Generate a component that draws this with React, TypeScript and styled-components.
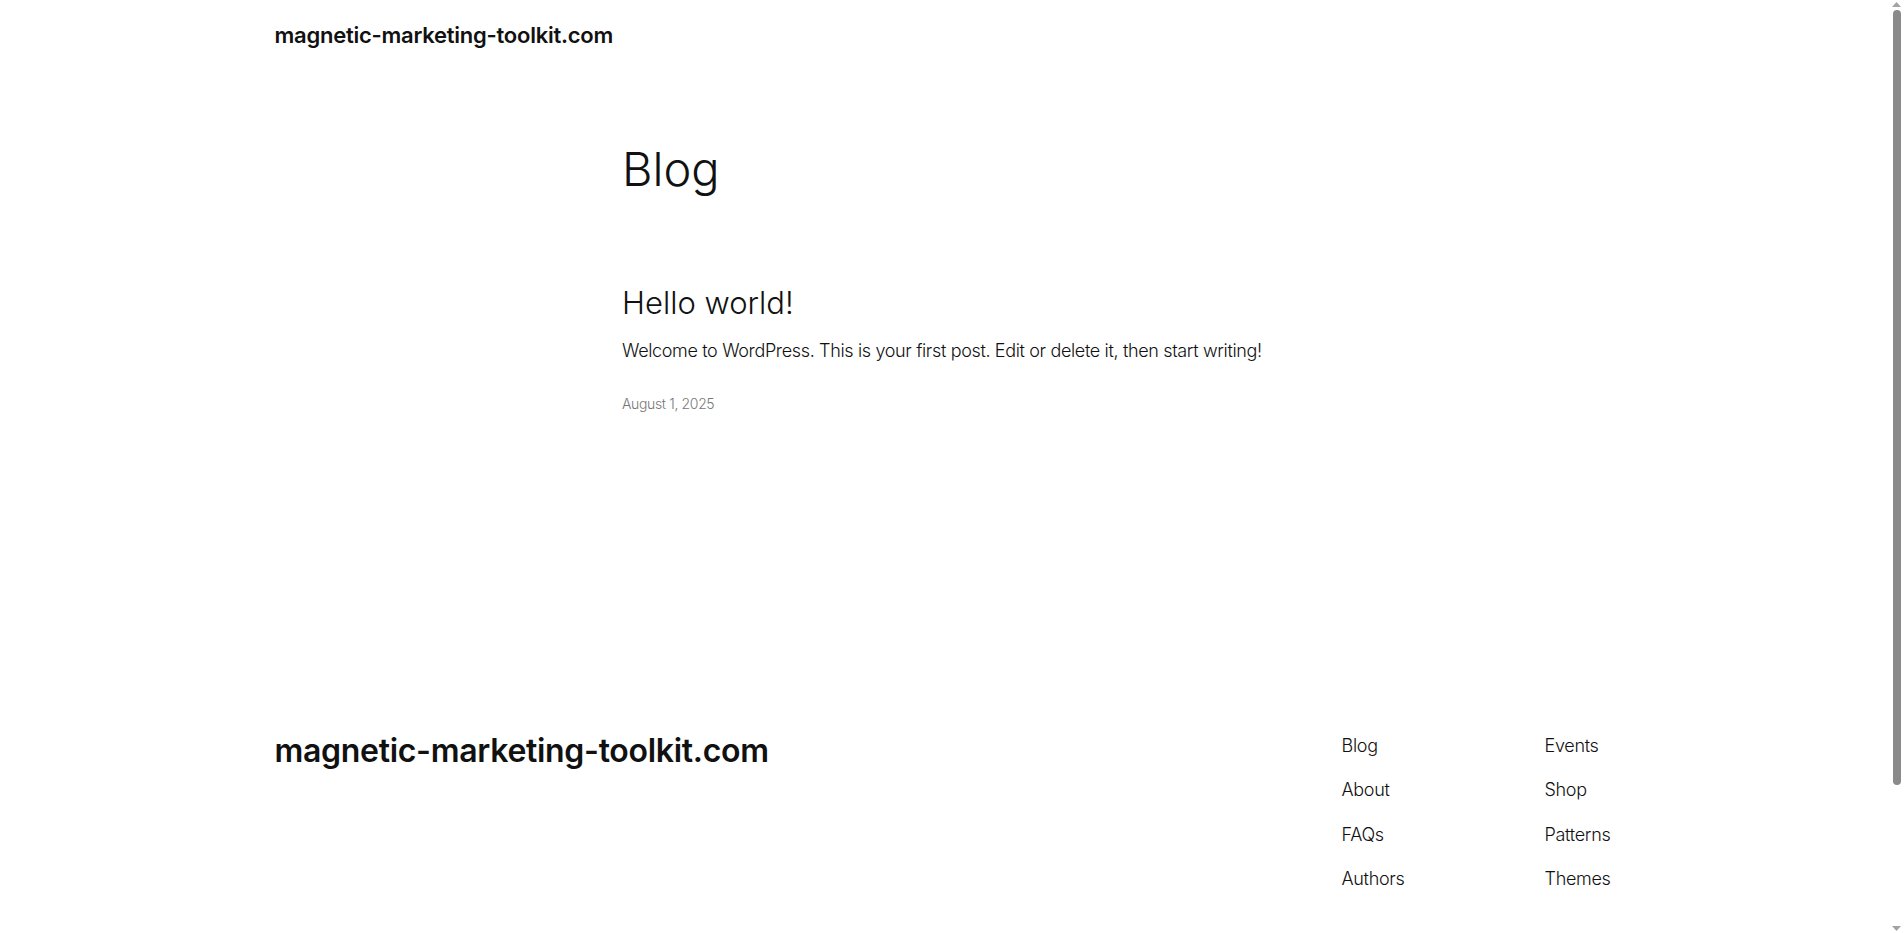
import React from "react";
import styled, { createGlobalStyle } from "styled-components";

const Global = createGlobalStyle`
  html, body { margin: 0; padding: 0; background: #ffffff; }
  body {
    font-family: Inter, "Noto Sans", "Liberation Sans", sans-serif;
    color: #111111;
    -webkit-font-smoothing: antialiased;
  }
  a { color: inherit; text-decoration: none; }
`;

const Page = styled.div`
  min-height: 1085px;
  padding-right: 15px;
  display: flex;
  flex-direction: column;
`;

const Wide = styled.div`
  width: 1340px;
  margin: 0 auto;
`;

const Header = styled(Wide)`
  padding: 20px 0;
  display: flex;
  align-items: center;
`;

const SiteTitle = styled.a<{ $size: number }>`
  font-size: ${(p) => p.$size}px;
  font-weight: 600;
  line-height: 1.4;
  letter-spacing: -0.25px;
  color: #111111;
`;

const Main = styled.main`
  width: 645px;
  margin: 0 auto;
  padding-top: 70px;
  display: flex;
  flex-direction: column;
`;

const PageTitle = styled.h1`
  margin: 0;
  font-size: 47px;
  line-height: 56px;
  font-weight: 300;
  letter-spacing: 0;
`;

const Post = styled.article`
  margin-top: 87px;
  display: flex;
  flex-direction: column;
`;

const PostTitle = styled.h2`
  margin: 0;
  font-size: 31px;
  line-height: 37px;
  font-weight: 300;
  letter-spacing: 0;
`;

const Excerpt = styled.p`
  margin: 16px 0 0;
  font-size: 18px;
  line-height: 28.8px;
  font-weight: 300;
  letter-spacing: -0.35px;
`;

const PostDate = styled.time`
  margin-top: 27px;
  font-size: 14px;
  line-height: 22px;
  font-weight: 300;
  color: #777777;
  letter-spacing: -0.35px;
`;

const Footer = styled(Wide)`
  margin-top: 317px;
  display: flex;
  justify-content: space-between;
  align-items: flex-start;
  padding-bottom: 161px;
`;

const FooterTitle = styled(SiteTitle)`
  line-height: 38px;
  letter-spacing: -0.3px;
`;

const Nav = styled.nav`
  display: grid;
  grid-template-columns: 203px 72px;
  margin-right: -2px;
`;

const NavColumn = styled.ul`
  list-style: none;
  margin: 0;
  padding: 0;
  display: flex;
  flex-direction: column;
  gap: 15.7px;
`;

const NavLink = styled.a`
  display: block;
  font-size: 18px;
  line-height: 28.8px;
  font-weight: 300;
  letter-spacing: -0.3px;
  white-space: nowrap;
  color: #111111;
`;

/* drawing of the browser scrollbar seen in the screenshot */
const ScrollTrack = styled.div`
  position: fixed;
  top: 0;
  right: 0;
  width: 15px;
  height: 100vh;
  background: #ffffff;
`;

const ScrollThumb = styled.div`
  position: absolute;
  top: 10px;
  left: 4px;
  width: 8px;
  height: 775px;
  border-radius: 4px;
  background: #8a8a8a;
`;

const ScrollArrow = styled.svg<{ $bottom?: boolean }>`
  position: absolute;
  left: 3px;
  ${(p) => (p.$bottom ? "bottom: 2px;" : "top: 2px;")}
  width: 9px;
  height: 5px;
`;

const columns = [
  ["Blog", "About", "FAQs", "Authors"],
  ["Events", "Shop", "Patterns", "Themes"],
];

export default function App() {
  return (
    <Page>
      <Global />
      <Header as="header">
        <SiteTitle $size={22} href="#">magnetic-marketing-toolkit.com</SiteTitle>
      </Header>
      <Main>
        <PageTitle>Blog</PageTitle>
        <Post>
          <PostTitle>Hello world!</PostTitle>
          <Excerpt>
            Welcome to WordPress. This is your first post. Edit or delete it, then start writing!
          </Excerpt>
          <PostDate>August 1, 2025</PostDate>
        </Post>
      </Main>
      <Footer as="footer">
        <FooterTitle $size={32} href="#">magnetic-marketing-toolkit.com</FooterTitle>
        <Nav>
          {columns.map((col, i) => (
            <NavColumn key={i}>
              {col.map((item) => (
                <li key={item}>
                  <NavLink href="#">{item}</NavLink>
                </li>
              ))}
            </NavColumn>
          ))}
        </Nav>
      </Footer>
      <ScrollTrack aria-hidden>
        <ScrollArrow viewBox="0 0 9 5">
          <path d="M0 5 L4.5 0 L9 5 Z" fill="#a3a3a3" />
        </ScrollArrow>
        <ScrollThumb />
        <ScrollArrow $bottom viewBox="0 0 9 5">
          <path d="M0 0 L4.5 5 L9 0 Z" fill="#a3a3a3" />
        </ScrollArrow>
      </ScrollTrack>
    </Page>
  );
}
